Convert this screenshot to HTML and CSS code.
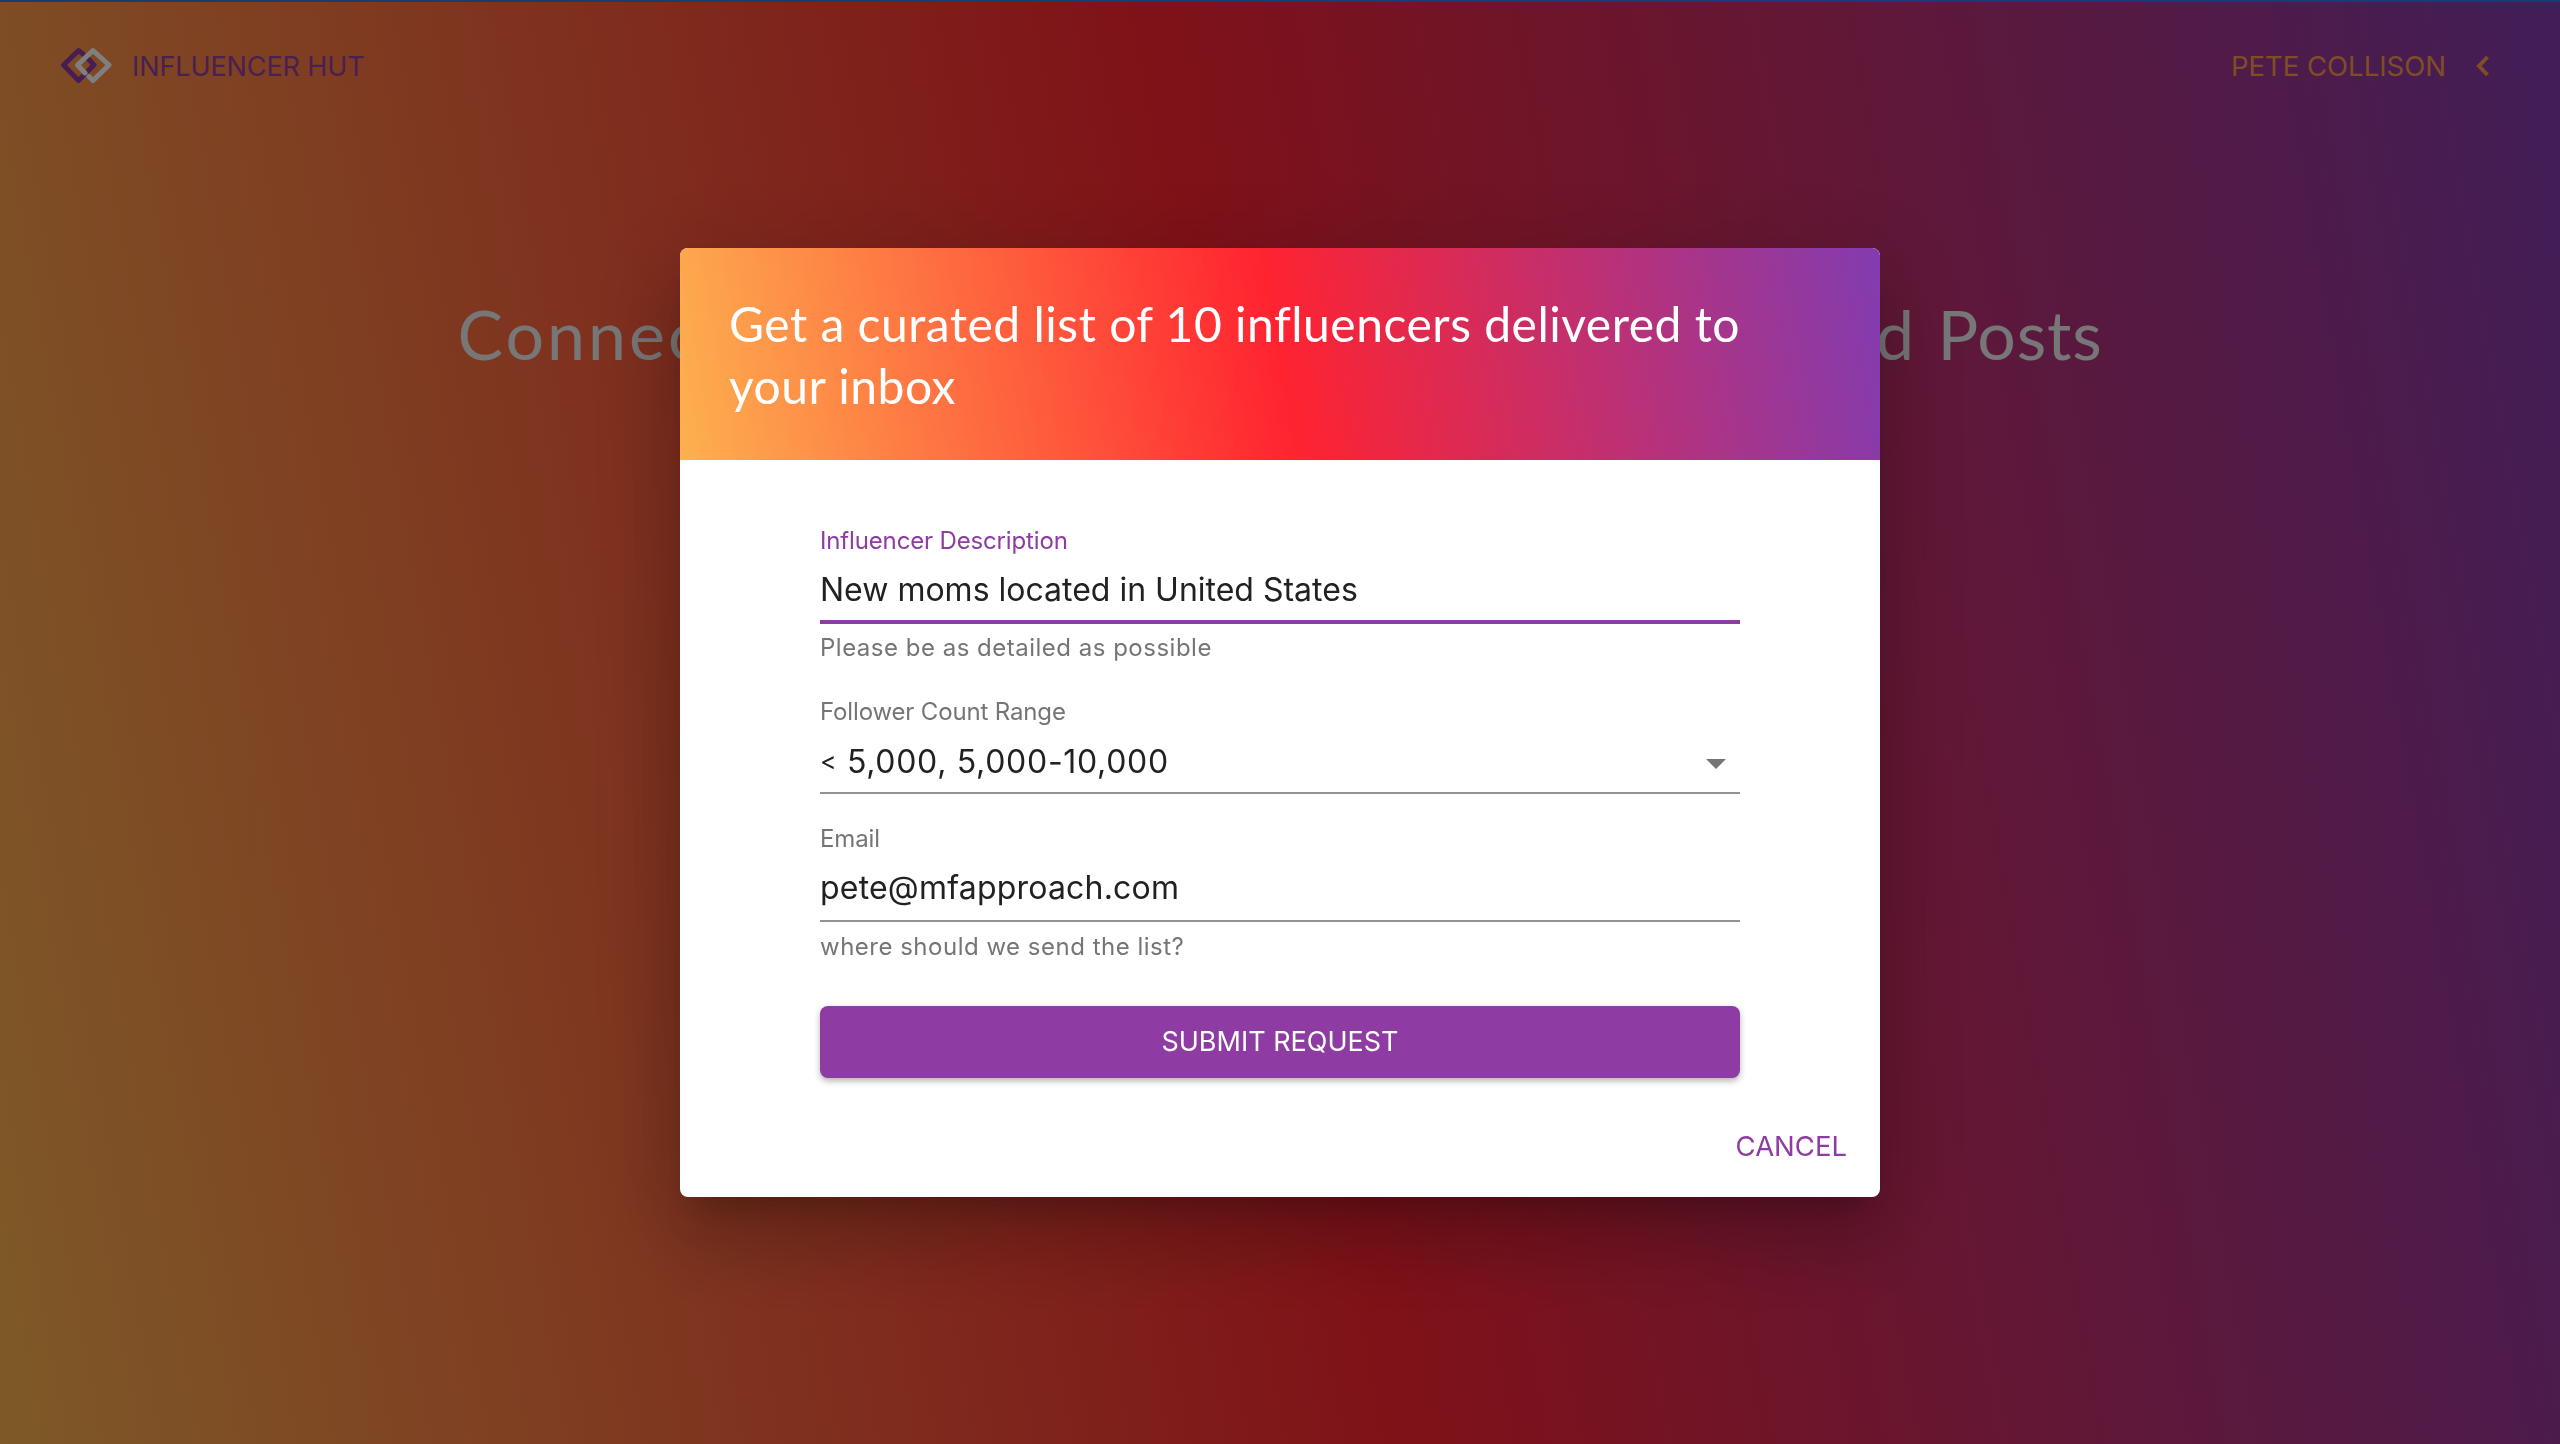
FILE: index.html
```html
<!DOCTYPE html>
<html>

<head>
    <meta charset="utf-8" />
    <title>Influencer Hut</title>
    <meta name="viewport" content="width=device-width, initial-scale=1">
    <link rel="stylesheet" href="styles.css">
</head>

<body>
    <div class="page">
        <header class="topbar">
            <div class="brand">
                <svg class="logo" viewBox="0 0 52 38" width="52" height="38">
                    <path class="logo-purple" d="M28 11.5 L34 18 L18.5 33.5 L3.5 18 L18.5 3.5 L23 7" />
                    <path class="logo-white" d="M25 26 L17.5 18 L33 3.5 L49 18 L33 33.5 L29 29.5" />
                </svg>
                <span class="brand-name">INFLUENCER HUT</span>
            </div>
            <div class="user">
                <span class="user-name">PETE COLLISON</span>
                <svg class="chevron" viewBox="0 0 14 22" width="14" height="22">
                    <path d="M11.5 2 L3 11 L11.5 20" />
                </svg>
            </div>
        </header>
        <h1 class="hero">Connect with Top Influencers and Sponsored <span class="hero-end">Posts</span></h1>
    </div>

    <div class="overlay">
        <div class="dialog">
            <div class="dialog-head">
                <h2>Get a curated list of 10 influencers delivered to<br>your inbox</h2>
            </div>
            <form class="dialog-form">
                <div class="field field-first">
                    <label class="field-label label-active">Influencer Description</label>
                    <div class="field-value value-active">New moms located in United States</div>
                    <p class="field-help">Please be as detailed as possible</p>
                </div>
                <div class="field field-select">
                    <label class="field-label">Follower Count Range</label>
                    <div class="field-value value-range">
                        <span><small class="less">&lt;</small> 5,000, 5,000-10,000</span>
                        <i class="caret"></i>
                    </div>
                </div>
                <div class="field field-email">
                    <label class="field-label">Email</label>
                    <div class="field-value value-email">pete@mfapproach.com</div>
                    <p class="field-help">where should we send the list?</p>
                </div>
                <button type="button" class="submit">SUBMIT REQUEST</button>
            </form>
            <div class="dialog-actions">
                <button type="button" class="cancel">CANCEL</button>
            </div>
        </div>
    </div>
</body>

</html>
```

FILE: styles.css
```css
* {
    box-sizing: border-box;
}

html,
body {
    margin: 0;
    height: 100%;
}

body {
    font-family: "Inter", "Liberation Sans", sans-serif;
    overflow: hidden;
}

.page {
    height: 1444px;
    border-top: 2px solid #2a7fe8;
    background: linear-gradient(80deg, #fdb44f 0%, #ff2330 50%, #823cb0 100%);
}

.topbar {
    display: flex;
    justify-content: space-between;
    align-items: center;
    height: 128px;
    padding: 0 70px 0 60px;
}

.brand,
.user {
    display: flex;
    align-items: center;
}

.logo {
    margin-right: 20px;
}

.logo path {
    fill: none;
    stroke-width: 5;
    stroke-linejoin: round;
    stroke-linecap: round;
}

.logo-purple {
    stroke: #8f3aa8;
}

.logo-white {
    stroke: #fff;
}

.brand-name {
    font-size: 27px;
    letter-spacing: -0.1px;
    color: #93409f;
}

.user-name {
    font-size: 27.5px;
    color: #fc9a4c;
}

.chevron {
    margin-left: 30px;
}

.chevron path {
    fill: none;
    stroke: #fc9a4c;
    stroke-width: 4;
}

.hero {
    margin: 163px 0 0;
    text-align: center;
    font-family: "Lato", sans-serif;
    font-weight: 400;
    font-size: 68px;
    letter-spacing: 3.05px;
    color: #eee;
}

.hero-end {
    letter-spacing: 0.8px;
}

.overlay {
    position: fixed;
    top: 0;
    left: 0;
    right: 0;
    bottom: 0;
    display: flex;
    align-items: center;
    justify-content: center;
    background: rgba(0, 0, 0, 0.5);
}

.dialog {
    width: 1200px;
    height: 949px;
    border-radius: 8px;
    overflow: hidden;
    background: #fff;
    box-shadow: 0 22px 30px -14px rgba(0, 0, 0, 0.2), 0 48px 76px 6px rgba(0, 0, 0, 0.14), 0 18px 92px 16px rgba(0, 0, 0, 0.12);
}

.dialog-head {
    height: 212px;
    padding: 45px 49px 0;
    background: linear-gradient(80deg, #fdb04f 0%, #ff2330 50%, #823cb0 100%);
}

.dialog-head h2 {
    margin: 0;
    font-family: "Lato", sans-serif;
    font-weight: 400;
    font-size: 48px;
    line-height: 62px;
    letter-spacing: 0.5px;
    color: #fff;
}

.dialog-form {
    padding: 0 140px;
}

.field-label {
    display: block;
    font-size: 24px;
    line-height: 30px;
    letter-spacing: -0.15px;
    color: #757575;
}

.label-active {
    color: #8e3ba3;
}

.field-first {
    padding-top: 66px;
}

.field-select {
    padding-top: 34px;
}

.field-email {
    padding-top: 30px;
}

.field-value {
    display: flex;
    justify-content: space-between;
    align-items: flex-end;
    height: 68px;
    padding-bottom: 13px;
    font-size: 32px;
    line-height: 38px;
    color: #212121;
    border-bottom: 2px solid #949494;
}

.value-active {
    border-bottom: 4px solid #8e3ba3;
    padding-bottom: 11px;
}

.value-range {
    height: 67px;
    padding-bottom: 11px;
    letter-spacing: 0.7px;
}

.less {
    font-size: 25px;
    vertical-align: 3px;
}

.value-email {
    letter-spacing: 0.2px;
}

.field-help {
    margin: 10px 0 0;
    font-size: 24px;
    line-height: 30px;
    letter-spacing: 0.5px;
    color: #757575;
}

.field-first .field-help {
    margin-top: 9px;
}

.caret {
    width: 0;
    height: 0;
    margin: 0 14px 12px 0;
    border-left: 10px solid transparent;
    border-right: 10px solid transparent;
    border-top: 10px solid #757575;
}

.submit {
    display: block;
    width: 100%;
    height: 72px;
    margin-top: 44px;
    border: none;
    border-radius: 8px;
    font-family: inherit;
    font-size: 27px;
    color: #fff;
    background: #8e3ba3;
    box-shadow: 0 3px 6px rgba(0, 0, 0, 0.3);
}

.dialog-actions {
    display: flex;
    justify-content: flex-end;
    padding: 50px 33px 0 0;
}

.cancel {
    padding: 0;
    border: none;
    background: none;
    font-family: inherit;
    font-size: 27.5px;
    line-height: 36px;
    color: #8e3ba3;
}
```
